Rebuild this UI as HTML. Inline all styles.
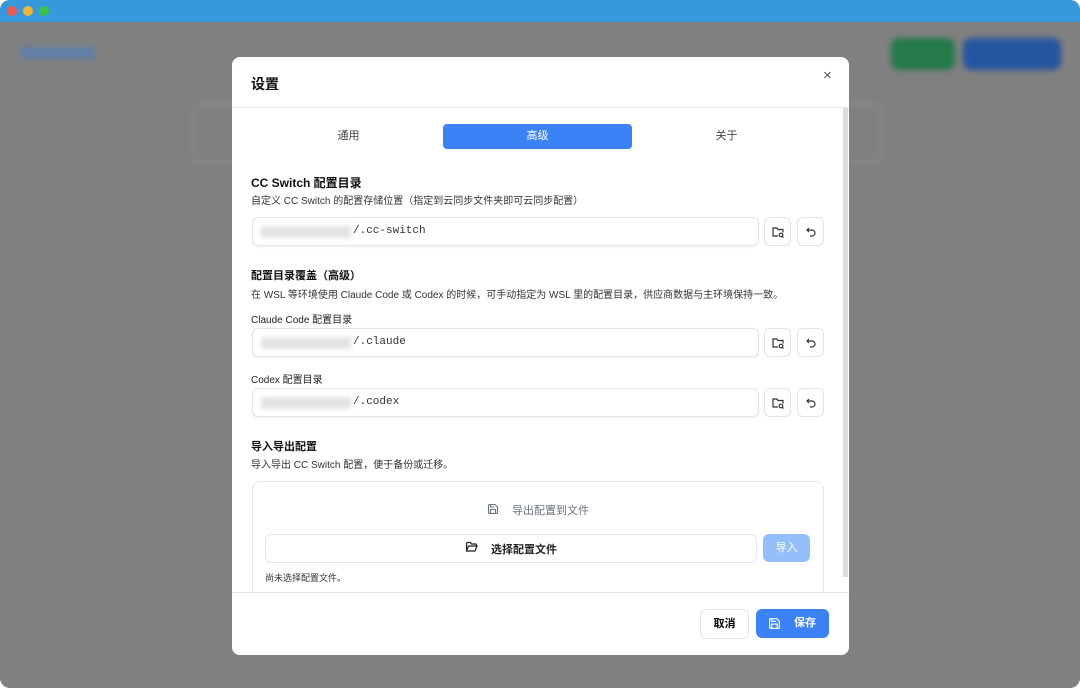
<html><head><style>
body{margin:0;width:1080px;height:688px;overflow:hidden;font-family:"Liberation Sans","Noto Sans CJK SC",sans-serif;background:#fff}
.win{position:absolute;inset:0;border-radius:10px;overflow:hidden;background:#808080}
.tb{position:absolute;left:0;top:0;width:1080px;height:22px;background:#3798db}
.dot{position:absolute;top:6px;width:10px;height:10px;border-radius:50%}
.bg{position:absolute;filter:blur(3px)}
.modal{position:absolute;left:232px;top:57px;width:617px;height:598px;background:#fff;border-radius:8px;overflow:hidden}
.t{position:absolute;color:#111;white-space:nowrap}
.inp{position:absolute;left:20px;width:505px;height:27px;border:1px solid #e2e4e8;border-radius:6px;box-shadow:0 1px 2px rgba(0,0,0,.06)}
.inp .blur{position:absolute;left:8px;top:8px;width:90px;height:12px;background:#e4e4e4;filter:blur(2px)}
.inp .v{position:absolute;left:100px;top:0;line-height:27px;font-family:"Liberation Mono",monospace;font-size:11px;color:#333}
.ib{position:absolute;width:25px;height:27px;border:1px solid #e2e4e8;border-radius:6px;display:flex;align-items:center;justify-content:center}
.tab{position:absolute;top:67px;width:189px;height:25px;font-size:11px;text-align:center;line-height:25px;color:#444}
</style></head><body><div class="win">
<div class="tb"></div>
<div class="dot" style="left:7px;background:#ee5a52"></div>
<div class="dot" style="left:23px;background:#f3b52f"></div>
<div class="dot" style="left:39px;background:#3cc144"></div>
<div class="bg" style="left:20px;top:47px;width:75px;height:12px;background:#5f7fa8"></div>
<div class="bg" style="left:891px;top:38px;width:64px;height:32px;background:#257a4a;border-radius:8px"></div>
<div class="bg" style="left:963px;top:38px;width:98px;height:32px;background:#2655a0;border-radius:8px"></div>
<div class="bg" style="left:193px;top:104px;width:687px;height:56px;border:1px solid #999;border-radius:8px"></div>
<div class="modal">
<div class="t" style="left:19px;top:17px;font-size:14px;font-weight:bold">设置</div>
<div class="t" style="left:591px;top:10px;font-size:15px;color:#555">×</div>
<div style="position:absolute;left:0;top:50px;width:617px;height:1px;background:#e5e7eb"></div>
<div style="position:absolute;left:611px;top:51px;width:5px;height:469px;background:#ddd"></div>
<div class="tab" style="left:22px">通用</div>
<div class="tab" style="left:211px;background:#3b82f6;border-radius:4px;color:#fff">高级</div>
<div class="tab" style="left:400px">关于</div>
<div class="t" style="left:19px;top:117px;font-size:12px;font-weight:bold">CC Switch 配置目录</div>
<div class="t" style="left:19px;top:135px;font-size:10px;color:#333">自定义 CC Switch 的配置存储位置（指定到云同步文件夹即可云同步配置）</div>
<div class="inp" style="top:160px"><div class="blur"></div><div class="v">/.cc-switch</div></div>
<div class="t" style="left:19px;top:210px;font-size:11px;font-weight:bold">配置目录覆盖（高级）</div>
<div class="t" style="left:19px;top:229px;font-size:10px;color:#333">在 WSL 等环境使用 Claude Code 或 Codex 的时候，可手动指定为 WSL 里的配置目录，供应商数据与主环境保持一致。</div>
<div class="t" style="left:19px;top:254px;font-size:10px;color:#222">Claude Code 配置目录</div>
<div class="inp" style="top:271px"><div class="blur"></div><div class="v">/.claude</div></div>
<div class="t" style="left:19px;top:314px;font-size:10px;color:#222">Codex 配置目录</div>
<div class="inp" style="top:331px"><div class="blur"></div><div class="v">/.codex</div></div>
<div class="t" style="left:19px;top:381px;font-size:11px;font-weight:bold">导入导出配置</div>
<div class="t" style="left:19px;top:399px;font-size:10px;color:#333">导入导出 CC Switch 配置，便于备份或迁移。</div>
<div style="position:absolute;left:20px;top:424px;width:570px;height:130px;border:1px solid #e5e7eb;border-radius:8px"></div>
<svg style="position:absolute;left:255px;top:446px" width="12" height="12" viewBox="0 0 12 12" fill="none" stroke="#6b7280" stroke-width="1.1"><path d="M1.5 2.5a1 1 0 011-1h5.5l2.5 2.5v5.5a1 1 0 01-1 1h-7a1 1 0 01-1-1z"/><path d="M3.5 10.5v-4h5v4M3.5 1.5v2.5h4"/></svg>
<div class="t" style="left:280px;top:445px;font-size:11px;color:#6b7280">导出配置到文件</div>
<div style="position:absolute;left:33px;top:477px;width:490px;height:27px;border:1px solid #e5e7eb;border-radius:6px"></div>
<svg style="position:absolute;left:233px;top:484px" width="13" height="12" viewBox="0 0 13 12" fill="none" stroke="#222" stroke-width="1.2"><path d="M1.5 10V2.5a1 1 0 011-1h3l1 1.5h4a1 1 0 011 1V5"/><path d="M1.5 10l2-5h8.5l-2 5z"/></svg>
<div class="t" style="left:259px;top:484px;font-size:11px;font-weight:bold;color:#222">选择配置文件</div>
<div style="position:absolute;left:531px;top:477px;width:47px;height:28px;background:#93c0fb;border-radius:6px;color:#fff;font-size:11px;text-align:center;line-height:28px">导入</div>
<div class="t" style="left:33px;top:514px;font-size:9px;color:#333">尚未选择配置文件。</div>
<div style="position:absolute;left:0;top:535px;width:617px;height:63px;background:#fff;border-top:1px solid #e5e7eb"></div>
<div style="position:absolute;left:468px;top:552px;width:47px;height:28px;border:1px solid #e2e4e8;border-radius:6px;font-size:11px;font-weight:bold;text-align:center;line-height:28px">取消</div>
<div style="position:absolute;left:524px;top:552px;width:73px;height:29px;background:#3b82f6;border-radius:6px;color:#fff;font-size:11px;font-weight:bold;line-height:29px"><span style="margin-left:38px">保存</span></div>
<svg style="position:absolute;left:536px;top:560px" width="13" height="13" viewBox="0 0 12 12" fill="none" stroke="#fff" stroke-width="1.1"><path d="M1.5 2.5a1 1 0 011-1h5.5l2.5 2.5v5.5a1 1 0 01-1 1h-7a1 1 0 01-1-1z"/><path d="M3.5 10.5v-4h5v4M3.5 1.5v2.5h4"/></svg>
</div>
<div style="position:absolute;left:764px;top:217px">
<div class="ib" style="left:0;top:0;position:absolute"><svg width="14" height="14" viewBox="0 0 14 14" fill="none" stroke="#333" stroke-width="1.2"><path d="M7 11H2V3h4l1 1.5h5v3"/><circle cx="10" cy="10" r="1.8"/><path d="M11.3 11.3l1.2 1.2"/></svg></div>
<div class="ib" style="left:33px;top:0;position:absolute"><svg width="14" height="14" viewBox="0 0 14 14" fill="none" stroke="#333" stroke-width="1.2"><path d="M5 3L3 5l2 2M3 5h5a3 3 0 010 6H6"/></svg></div>
</div>
<div style="position:absolute;left:764px;top:328px">
<div class="ib" style="left:0;top:0;position:absolute"><svg width="14" height="14" viewBox="0 0 14 14" fill="none" stroke="#333" stroke-width="1.2"><path d="M7 11H2V3h4l1 1.5h5v3"/><circle cx="10" cy="10" r="1.8"/><path d="M11.3 11.3l1.2 1.2"/></svg></div>
<div class="ib" style="left:33px;top:0;position:absolute"><svg width="14" height="14" viewBox="0 0 14 14" fill="none" stroke="#333" stroke-width="1.2"><path d="M5 3L3 5l2 2M3 5h5a3 3 0 010 6H6"/></svg></div>
</div>
<div style="position:absolute;left:764px;top:388px">
<div class="ib" style="left:0;top:0;position:absolute"><svg width="14" height="14" viewBox="0 0 14 14" fill="none" stroke="#333" stroke-width="1.2"><path d="M7 11H2V3h4l1 1.5h5v3"/><circle cx="10" cy="10" r="1.8"/><path d="M11.3 11.3l1.2 1.2"/></svg></div>
<div class="ib" style="left:33px;top:0;position:absolute"><svg width="14" height="14" viewBox="0 0 14 14" fill="none" stroke="#333" stroke-width="1.2"><path d="M5 3L3 5l2 2M3 5h5a3 3 0 010 6H6"/></svg></div>
</div>
</div></body></html>
